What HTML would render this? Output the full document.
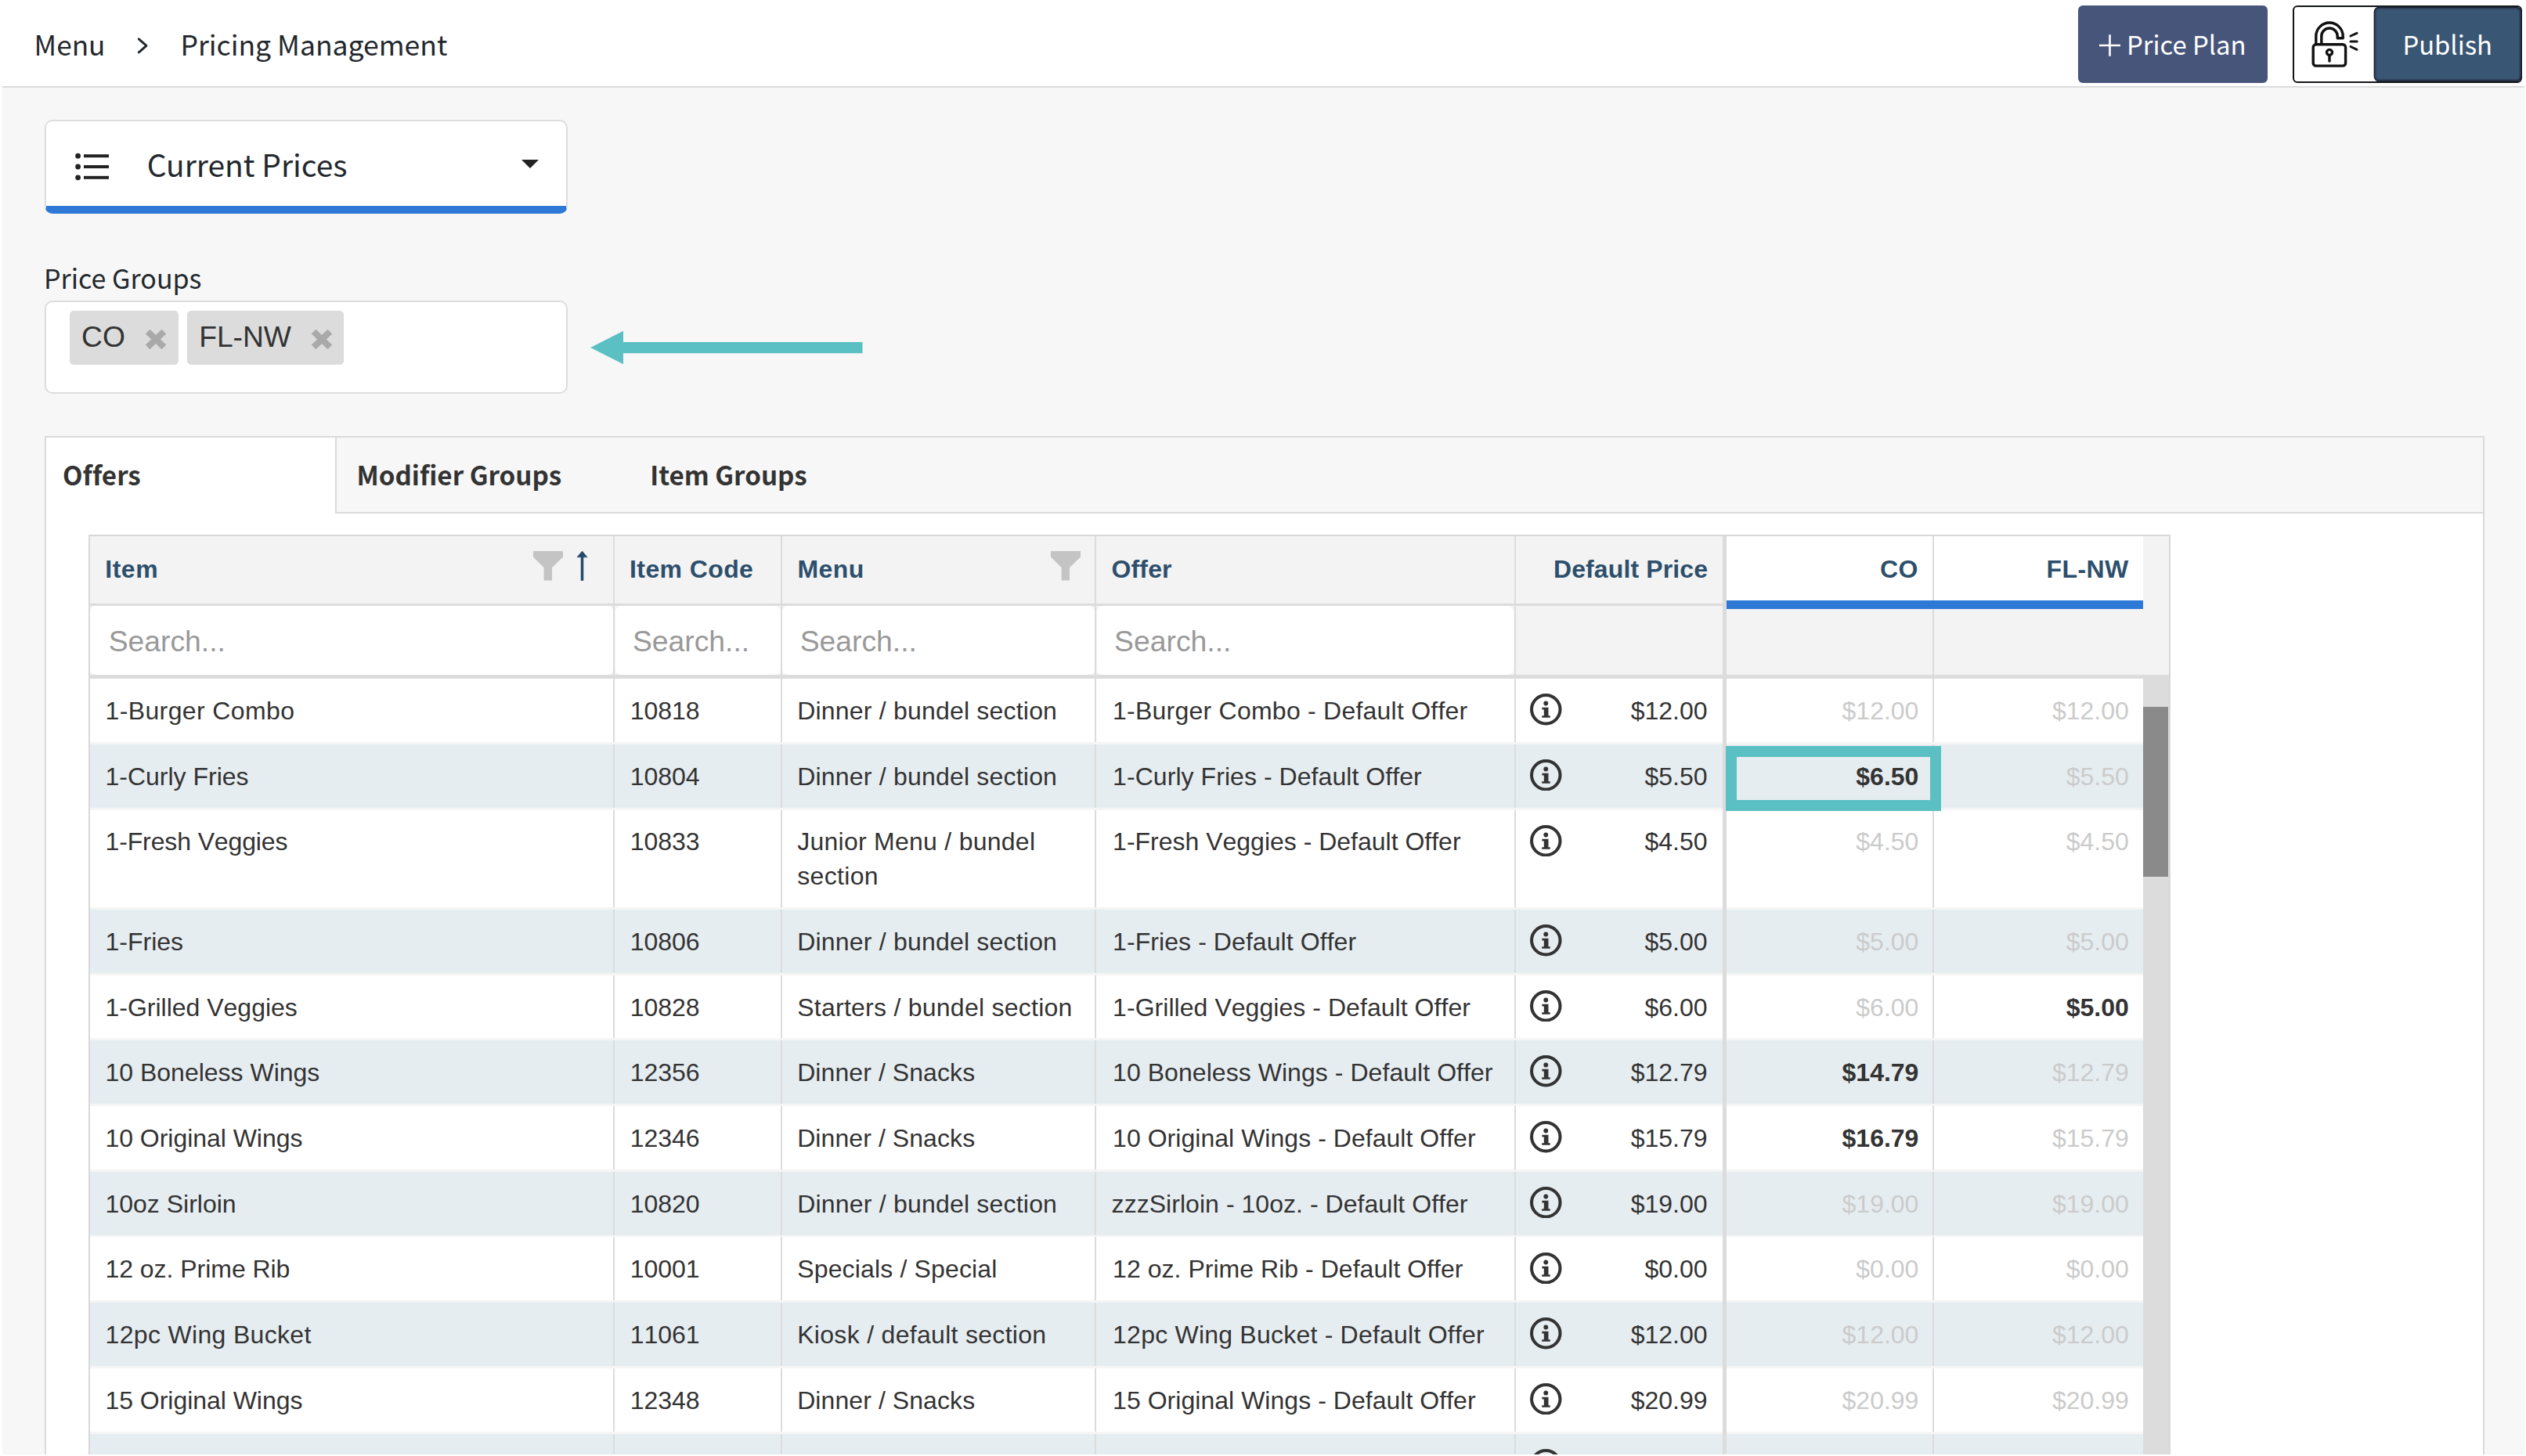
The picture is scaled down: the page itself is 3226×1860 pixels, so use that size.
<!DOCTYPE html><html lang="en"><head><meta charset="utf-8"><title>Pricing Management</title><style>
*{box-sizing:border-box}
html,body{margin:0;padding:0}
body{width:3226px;height:1860px;overflow:hidden;background:#fff;position:relative;font-family:"Liberation Sans",sans-serif;color:#333}
.abs,.abs *{position:absolute}
.abs{left:0;top:0;width:3226px;height:1860px;overflow:hidden}
.ss{font-family:"Noto Sans CJK SC","Liberation Sans",sans-serif;white-space:pre;line-height:1;font-variant-ligatures:none}
.hv{font-family:"Liberation Sans",sans-serif;white-space:pre;font-kerning:none}
#page{left:3px;top:112px;width:3220.8px;height:1746px;background:#f7f7f7}
#hdrline{left:3px;top:110.2px;width:3220.8px;height:2.6px;background:#dcdcdc}
.bc{color:#23282d;top:38px}
.btn{border-radius:6px;color:#fff;font-size:32.8px}
.box{background:#fff;border:2px solid #ddd;border-radius:10px}
.tag{background:#dcdcdc;border-radius:5px;top:396.6px;height:69.2px}
.tag span{font-size:37.2px;top:12.4px;line-height:42px;color:#333;letter-spacing:0}
.tab{font-size:33.2px;font-weight:700;color:#333;top:589px}
.th{font-weight:700;font-size:32.0px;color:#2d4f6c;top:704.7px;line-height:44px}
.ph{font-size:37.3px;color:#999;top:796.9px;line-height:44px}
.srch{background:#fff;border-radius:7px;top:773.8px;height:88.4px}
.row{left:115px;width:2622px;background:#fff}
.row.alt{background:#e6edf1}
.row .ln{left:0;right:0;bottom:0;height:2.9px;background:#f5f5f5}
.c{font-size:32.0px;line-height:43.5px;top:19.86px;color:#333}
.c.r{text-align:right}
.c.g{color:#cbcbcb}
.c.b{font-weight:700}
.info{top:19.1px}
.vl{top:685px;width:2px;height:1175px;background:#dcdcdc}
</style></head><body><div class="abs">
<div id="hdrline"></div><div id="page"></div>
<nav aria-label="Breadcrumb" style="left:0;top:0;width:700px;height:110px">
<span class="ss bc" style="left:43.6px;font-size:35.2px">Menu</span>
<svg style="left:170px;top:42px" width="26" height="32" viewBox="170 42 26 32"><path d="M177.3 49.8L187 58.3L177.3 66.8" fill="none" stroke="#23282d" stroke-width="3" stroke-linecap="round" stroke-linejoin="round"/></svg>
<span class="ss bc" style="left:230.6px;font-size:35.5px">Pricing Management</span></nav>
<div class="btn" role="button" style="left:2654px;top:7px;width:242px;height:99px;background:#47557b"><svg style="left:26px;top:36px" width="30" height="30" viewBox="0 0 30 30"><path d="M14.5 1.3v27.4M1 15h27" stroke="#fff" stroke-width="2.6" fill="none"/></svg><span class="ss" style="left:62px;top:32.8px">Price Plan</span></div>
<div style="left:2928.2px;top:7px;width:293px;height:98.6px;border:2.6px solid #121417;border-radius:6px;background:#fff"></div>
<div class="btn" role="button" style="left:3033px;top:10.3px;width:186.2px;height:92.8px;background:#3a5675;border-radius:5.5px;border:2.2px solid #30415c;box-shadow:0 0 0 1.4px #1a2431"><span class="ss" style="left:33.4px;top:27.3px">Publish</span></div>
<svg style="left:2940px;top:20px" width="80" height="75" viewBox="2940 20 80 75" fill="none" stroke="#111" stroke-width="3.4" stroke-linecap="round" stroke-linejoin="round"><rect x="2954.2" y="56.8" width="41.4" height="27.3" rx="3.6"/><path d="M2957.8 56V46.2A17.2 17.2 0 0 1 2992.2 46.2V48.8H2985.2V46.2A10.2 10.2 0 0 0 2964.8 46.2V56"/><circle cx="2975" cy="66.9" r="3.5"/><path d="M2975 70.5V78"/><path d="M3002 46L3010 42.3M3002 52.9H3010.2M3002 59.5L3010 63.3" stroke-width="3"/></svg>
<div class="box" style="left:56.5px;top:153px;width:668px;height:120px;border-bottom:10.5px solid #2e79d6"></div>
<svg style="left:96px;top:195px" width="44" height="36" viewBox="0 0 44 36" fill="#222"><circle cx="3.6" cy="4.2" r="3.4"/><circle cx="3.6" cy="18" r="3.4"/><circle cx="3.6" cy="31.8" r="3.4"/><rect x="11" y="2.2" width="32" height="4"/><rect x="11" y="16" width="32" height="4"/><rect x="11" y="29.8" width="32" height="4"/></svg>
<span class="ss" style="left:187.7px;top:190.2px;font-size:38.95px;color:#23282d">Current Prices</span>
<svg style="left:666px;top:204px" width="22" height="11" viewBox="0 0 22 11"><path d="M0 0h22L11 11z" fill="#222"/></svg>
<span class="ss" style="left:56px;top:337.7px;font-size:34px;color:#23282d">Price Groups</span>
<div class="box" style="left:56.5px;top:383.5px;width:668px;height:119px"></div>
<div class="tag" style="left:88.7px;width:139px"><span class="hv" style="left:15.4px">CO</span><svg style="left:96.8px;top:23px" width="28" height="27" viewBox="0 0 28 27"><path d="M3.6 3.6L24.4 23.4M24.4 3.6L3.6 23.4" stroke="#a9a9a9" stroke-width="8.2" fill="none"/></svg></div>
<div class="tag" style="left:238.7px;width:200px"><span class="hv" style="left:15.5px">FL-NW</span><svg style="left:158.3px;top:23px" width="28" height="27" viewBox="0 0 28 27"><path d="M3.6 3.6L24.4 23.4M24.4 3.6L3.6 23.4" stroke="#a9a9a9" stroke-width="8.2" fill="none"/></svg></div>
<svg style="left:750px;top:418px" width="356" height="52" viewBox="750 418 356 52"><path d="M754 444.1L796 422.8V437H1101.5V451.3H796V465.2z" fill="#5bc0c3"/></svg>
<div style="left:57px;top:557px;width:3116px;height:1320px;border:2px solid #dadada;background:#fff"></div>
<div style="left:428px;top:559px;width:2743px;height:96.5px;background:#f7f7f7;border-left:2px solid #dadada;border-bottom:2px solid #dadada"></div>
<span class="ss tab" role="tab" aria-selected="true" style="left:80px">Offers</span><span class="ss tab" role="tab" style="left:455.4px">Modifier Groups</span><span class="ss tab" role="tab" style="left:830.2px">Item Groups</span>
<div style="left:113px;top:683px;width:2658.8px;height:1200px;border:2px solid #d8d8d8;background:#fff"></div>
<div style="left:115px;top:685px;width:2654.8px;height:177.5px;background:#f3f3f3"></div>
<div style="left:2204.5px;top:685px;width:532.5px;height:82.5px;background:#fff"></div>
<div style="left:115px;top:771.4px;width:2087px;height:2.4px;background:#dcdcdc"></div>
<div class="srch" style="left:115.0px;width:667.8px"></div>
<span class="hv ph" style="left:138.7px">Search...</span>
<div class="srch" style="left:785.6px;width:211.0px"></div>
<span class="hv ph" style="left:807.9px">Search...</span>
<div class="srch" style="left:999.4px;width:398.6px"></div>
<span class="hv ph" style="left:1021.7px">Search...</span>
<div class="srch" style="left:1400.8px;width:532.3px"></div>
<span class="hv ph" style="left:1423.1px">Search...</span>
<span class="hv th" style="left:134.2px;letter-spacing:0.567px">Item</span>
<span class="hv th" style="left:804.1px;letter-spacing:0.384px">Item Code</span>
<span class="hv th" style="left:1018.5px;letter-spacing:0.449px">Menu</span>
<span class="hv th" style="left:1419.6px;letter-spacing:0.114px">Offer</span>
<span class="hv th" style="right:1044.8px;letter-spacing:0.127px">Default Price</span>
<span class="hv th" style="right:776.4px;letter-spacing:0.304px">CO</span>
<span class="hv th" style="right:507.5px;letter-spacing:0.367px">FL-NW</span>
<svg style="left:681px;top:704px" width="38" height="37.5" viewBox="0 0 38 37.5"><path d="M0 0h38v7.5L24 21v16.5H13.6V21L0 7.5z" fill="#c4c4c4"/></svg>
<svg style="left:1341.5px;top:704px" width="38" height="37.5" viewBox="0 0 38 37.5"><path d="M0 0h38v7.5L24 21v16.5H13.6V21L0 7.5z" fill="#c4c4c4"/></svg>
<svg style="left:736.1px;top:704.3px" width="15" height="38" viewBox="0 0 15 38"><path d="M7.5 0L14 7.8H8.95V37.5H6.05V7.8H1z" fill="#23496a" stroke="#23496a" stroke-width=".6" stroke-linejoin="round"/></svg>
<div class="row" role="row" style="top:867.20px;height:83.70px"><div class="ln"></div>
<span class="hv c" style="left:19.5px;letter-spacing:0.377px">1-Burger Combo</span>
<span class="hv c" style="left:689.7px;letter-spacing:-0.005px">10818</span>
<span class="hv c" style="left:903.2px;top:19.86px;letter-spacing:0.201px">Dinner / bundel section</span>
<span class="hv c" style="left:1306.1px;letter-spacing:0.234px">1-Burger Combo - Default Offer</span>
<svg class="info" style="left:1839.4px" viewBox="0 0 40 40" width="40.5" height="40.5"><circle cx="20" cy="20" r="18" fill="none" stroke="#333" stroke-width="4"/><circle cx="20" cy="12.3" r="2.9" fill="#333"/><path d="M15.2 17.6h8v10.2h2.2v2.6h-10.4v-2.6h2.6v-7.6h-2.4z" fill="#333"/></svg>
<span class="hv c r" style="right:556.5px;letter-spacing:-0.003px">$12.00</span>
<span class="hv c r g" style="right:286.6px;letter-spacing:-0.003px">$12.00</span>
<span class="hv c r g" style="right:18.2px;letter-spacing:-0.003px">$12.00</span>
</div>
<div class="row alt" role="row" style="top:950.90px;height:83.70px"><div class="ln"></div>
<span class="hv c" style="left:19.5px;letter-spacing:-0.002px">1-Curly Fries</span>
<span class="hv c" style="left:689.7px;letter-spacing:-0.005px">10804</span>
<span class="hv c" style="left:903.2px;top:19.86px;letter-spacing:0.201px">Dinner / bundel section</span>
<span class="hv c" style="left:1306.1px;letter-spacing:0.059px">1-Curly Fries - Default Offer</span>
<svg class="info" style="left:1839.4px" viewBox="0 0 40 40" width="40.5" height="40.5"><circle cx="20" cy="20" r="18" fill="none" stroke="#333" stroke-width="4"/><circle cx="20" cy="12.3" r="2.9" fill="#333"/><path d="M15.2 17.6h8v10.2h2.2v2.6h-10.4v-2.6h2.6v-7.6h-2.4z" fill="#333"/></svg>
<span class="hv c r" style="right:556.5px;letter-spacing:-0.003px">$5.50</span>
<span class="hv c r b" style="right:286.6px;letter-spacing:-0.003px">$6.50</span>
<span class="hv c r g" style="right:18.2px;letter-spacing:-0.003px">$5.50</span>
</div>
<div class="row" role="row" style="top:1034.60px;height:127.35px"><div class="ln"></div>
<span class="hv c" style="left:19.5px;letter-spacing:-0.126px">1-Fresh Veggies</span>
<span class="hv c" style="left:689.7px;letter-spacing:-0.005px">10833</span>
<span class="hv c" style="left:903.2px;top:19.86px;letter-spacing:0.263px">Junior Menu / bundel</span>
<span class="hv c" style="left:903.2px;top:63.36px;letter-spacing:0.332px">section</span>
<span class="hv c" style="left:1306.1px;letter-spacing:-0.005px">1-Fresh Veggies - Default Offer</span>
<svg class="info" style="left:1839.4px" viewBox="0 0 40 40" width="40.5" height="40.5"><circle cx="20" cy="20" r="18" fill="none" stroke="#333" stroke-width="4"/><circle cx="20" cy="12.3" r="2.9" fill="#333"/><path d="M15.2 17.6h8v10.2h2.2v2.6h-10.4v-2.6h2.6v-7.6h-2.4z" fill="#333"/></svg>
<span class="hv c r" style="right:556.5px;letter-spacing:-0.003px">$4.50</span>
<span class="hv c r g" style="right:286.6px;letter-spacing:-0.003px">$4.50</span>
<span class="hv c r g" style="right:18.2px;letter-spacing:-0.003px">$4.50</span>
</div>
<div class="row alt" role="row" style="top:1161.95px;height:83.70px"><div class="ln"></div>
<span class="hv c" style="left:19.5px;letter-spacing:-0.001px">1-Fries</span>
<span class="hv c" style="left:689.7px;letter-spacing:-0.005px">10806</span>
<span class="hv c" style="left:903.2px;top:19.86px;letter-spacing:0.201px">Dinner / bundel section</span>
<span class="hv c" style="left:1306.1px;letter-spacing:0.075px">1-Fries - Default Offer</span>
<svg class="info" style="left:1839.4px" viewBox="0 0 40 40" width="40.5" height="40.5"><circle cx="20" cy="20" r="18" fill="none" stroke="#333" stroke-width="4"/><circle cx="20" cy="12.3" r="2.9" fill="#333"/><path d="M15.2 17.6h8v10.2h2.2v2.6h-10.4v-2.6h2.6v-7.6h-2.4z" fill="#333"/></svg>
<span class="hv c r" style="right:556.5px;letter-spacing:-0.003px">$5.00</span>
<span class="hv c r g" style="right:286.6px;letter-spacing:-0.003px">$5.00</span>
<span class="hv c r g" style="right:18.2px;letter-spacing:-0.003px">$5.00</span>
</div>
<div class="row" role="row" style="top:1245.65px;height:83.70px"><div class="ln"></div>
<span class="hv c" style="left:19.5px;letter-spacing:-0.008px">1-Grilled Veggies</span>
<span class="hv c" style="left:689.7px;letter-spacing:-0.005px">10828</span>
<span class="hv c" style="left:903.2px;top:19.86px;letter-spacing:0.255px">Starters / bundel section</span>
<span class="hv c" style="left:1306.1px;letter-spacing:0.048px">1-Grilled Veggies - Default Offer</span>
<svg class="info" style="left:1839.4px" viewBox="0 0 40 40" width="40.5" height="40.5"><circle cx="20" cy="20" r="18" fill="none" stroke="#333" stroke-width="4"/><circle cx="20" cy="12.3" r="2.9" fill="#333"/><path d="M15.2 17.6h8v10.2h2.2v2.6h-10.4v-2.6h2.6v-7.6h-2.4z" fill="#333"/></svg>
<span class="hv c r" style="right:556.5px;letter-spacing:-0.003px">$6.00</span>
<span class="hv c r g" style="right:286.6px;letter-spacing:-0.003px">$6.00</span>
<span class="hv c r b" style="right:18.2px;letter-spacing:-0.003px">$5.00</span>
</div>
<div class="row alt" role="row" style="top:1329.35px;height:83.70px"><div class="ln"></div>
<span class="hv c" style="left:19.5px;letter-spacing:-0.006px">10 Boneless Wings</span>
<span class="hv c" style="left:689.7px;letter-spacing:-0.005px">12356</span>
<span class="hv c" style="left:903.2px;top:19.86px;letter-spacing:0.076px">Dinner / Snacks</span>
<span class="hv c" style="left:1306.1px;letter-spacing:0.050px">10 Boneless Wings - Default Offer</span>
<svg class="info" style="left:1839.4px" viewBox="0 0 40 40" width="40.5" height="40.5"><circle cx="20" cy="20" r="18" fill="none" stroke="#333" stroke-width="4"/><circle cx="20" cy="12.3" r="2.9" fill="#333"/><path d="M15.2 17.6h8v10.2h2.2v2.6h-10.4v-2.6h2.6v-7.6h-2.4z" fill="#333"/></svg>
<span class="hv c r" style="right:556.5px;letter-spacing:-0.003px">$12.79</span>
<span class="hv c r b" style="right:286.6px;letter-spacing:-0.003px">$14.79</span>
<span class="hv c r g" style="right:18.2px;letter-spacing:-0.003px">$12.79</span>
</div>
<div class="row" role="row" style="top:1413.05px;height:83.70px"><div class="ln"></div>
<span class="hv c" style="left:19.5px;letter-spacing:-0.038px">10 Original Wings</span>
<span class="hv c" style="left:689.7px;letter-spacing:-0.005px">12346</span>
<span class="hv c" style="left:903.2px;top:19.86px;letter-spacing:0.076px">Dinner / Snacks</span>
<span class="hv c" style="left:1306.1px;letter-spacing:0.033px">10 Original Wings - Default Offer</span>
<svg class="info" style="left:1839.4px" viewBox="0 0 40 40" width="40.5" height="40.5"><circle cx="20" cy="20" r="18" fill="none" stroke="#333" stroke-width="4"/><circle cx="20" cy="12.3" r="2.9" fill="#333"/><path d="M15.2 17.6h8v10.2h2.2v2.6h-10.4v-2.6h2.6v-7.6h-2.4z" fill="#333"/></svg>
<span class="hv c r" style="right:556.5px;letter-spacing:-0.003px">$15.79</span>
<span class="hv c r b" style="right:286.6px;letter-spacing:-0.003px">$16.79</span>
<span class="hv c r g" style="right:18.2px;letter-spacing:-0.003px">$15.79</span>
</div>
<div class="row alt" role="row" style="top:1496.75px;height:83.70px"><div class="ln"></div>
<span class="hv c" style="left:19.5px;letter-spacing:-0.011px">10oz Sirloin</span>
<span class="hv c" style="left:689.7px;letter-spacing:-0.005px">10820</span>
<span class="hv c" style="left:903.2px;top:19.86px;letter-spacing:0.201px">Dinner / bundel section</span>
<span class="hv c" style="left:1304.6px;letter-spacing:0.044px">zzzSirloin - 10oz. - Default Offer</span>
<svg class="info" style="left:1839.4px" viewBox="0 0 40 40" width="40.5" height="40.5"><circle cx="20" cy="20" r="18" fill="none" stroke="#333" stroke-width="4"/><circle cx="20" cy="12.3" r="2.9" fill="#333"/><path d="M15.2 17.6h8v10.2h2.2v2.6h-10.4v-2.6h2.6v-7.6h-2.4z" fill="#333"/></svg>
<span class="hv c r" style="right:556.5px;letter-spacing:-0.003px">$19.00</span>
<span class="hv c r g" style="right:286.6px;letter-spacing:-0.003px">$19.00</span>
<span class="hv c r g" style="right:18.2px;letter-spacing:-0.003px">$19.00</span>
</div>
<div class="row" role="row" style="top:1580.45px;height:83.70px"><div class="ln"></div>
<span class="hv c" style="left:19.5px;letter-spacing:-0.041px">12 oz. Prime Rib</span>
<span class="hv c" style="left:689.7px;letter-spacing:-0.005px">10001</span>
<span class="hv c" style="left:903.2px;top:19.86px;letter-spacing:0.156px">Specials / Special</span>
<span class="hv c" style="left:1306.1px;letter-spacing:0.034px">12 oz. Prime Rib - Default Offer</span>
<svg class="info" style="left:1839.4px" viewBox="0 0 40 40" width="40.5" height="40.5"><circle cx="20" cy="20" r="18" fill="none" stroke="#333" stroke-width="4"/><circle cx="20" cy="12.3" r="2.9" fill="#333"/><path d="M15.2 17.6h8v10.2h2.2v2.6h-10.4v-2.6h2.6v-7.6h-2.4z" fill="#333"/></svg>
<span class="hv c r" style="right:556.5px;letter-spacing:-0.003px">$0.00</span>
<span class="hv c r g" style="right:286.6px;letter-spacing:-0.003px">$0.00</span>
<span class="hv c r g" style="right:18.2px;letter-spacing:-0.003px">$0.00</span>
</div>
<div class="row alt" role="row" style="top:1664.15px;height:83.70px"><div class="ln"></div>
<span class="hv c" style="left:19.5px;letter-spacing:0.331px">12pc Wing Bucket</span>
<span class="hv c" style="left:689.7px;letter-spacing:-0.005px">11061</span>
<span class="hv c" style="left:903.2px;top:19.86px;letter-spacing:0.304px">Kiosk / default section</span>
<span class="hv c" style="left:1306.1px;letter-spacing:0.220px">12pc Wing Bucket - Default Offer</span>
<svg class="info" style="left:1839.4px" viewBox="0 0 40 40" width="40.5" height="40.5"><circle cx="20" cy="20" r="18" fill="none" stroke="#333" stroke-width="4"/><circle cx="20" cy="12.3" r="2.9" fill="#333"/><path d="M15.2 17.6h8v10.2h2.2v2.6h-10.4v-2.6h2.6v-7.6h-2.4z" fill="#333"/></svg>
<span class="hv c r" style="right:556.5px;letter-spacing:-0.003px">$12.00</span>
<span class="hv c r g" style="right:286.6px;letter-spacing:-0.003px">$12.00</span>
<span class="hv c r g" style="right:18.2px;letter-spacing:-0.003px">$12.00</span>
</div>
<div class="row" role="row" style="top:1747.85px;height:83.70px"><div class="ln"></div>
<span class="hv c" style="left:19.5px;letter-spacing:-0.038px">15 Original Wings</span>
<span class="hv c" style="left:689.7px;letter-spacing:-0.005px">12348</span>
<span class="hv c" style="left:903.2px;top:19.86px;letter-spacing:0.076px">Dinner / Snacks</span>
<span class="hv c" style="left:1306.1px;letter-spacing:0.033px">15 Original Wings - Default Offer</span>
<svg class="info" style="left:1839.4px" viewBox="0 0 40 40" width="40.5" height="40.5"><circle cx="20" cy="20" r="18" fill="none" stroke="#333" stroke-width="4"/><circle cx="20" cy="12.3" r="2.9" fill="#333"/><path d="M15.2 17.6h8v10.2h2.2v2.6h-10.4v-2.6h2.6v-7.6h-2.4z" fill="#333"/></svg>
<span class="hv c r" style="right:556.5px;letter-spacing:-0.003px">$20.99</span>
<span class="hv c r g" style="right:286.6px;letter-spacing:-0.003px">$20.99</span>
<span class="hv c r g" style="right:18.2px;letter-spacing:-0.003px">$20.99</span>
</div>
<div class="row alt" role="row" style="top:1831.55px;height:83.70px"><div class="ln"></div>
<span class="hv c" style="left:19.5px;letter-spacing:0.025px">15 Traditional Wings</span>
<span class="hv c" style="left:689.7px;letter-spacing:-0.005px">12349</span>
<span class="hv c" style="left:903.2px;top:19.86px;letter-spacing:0.076px">Dinner / Snacks</span>
<span class="hv c" style="left:1306.1px;letter-spacing:0.062px">15 Traditional Wings - Default Offer</span>
<svg class="info" style="left:1839.4px" viewBox="0 0 40 40" width="40.5" height="40.5"><circle cx="20" cy="20" r="18" fill="none" stroke="#333" stroke-width="4"/><circle cx="20" cy="12.3" r="2.9" fill="#333"/><path d="M15.2 17.6h8v10.2h2.2v2.6h-10.4v-2.6h2.6v-7.6h-2.4z" fill="#333"/></svg>
<span class="hv c r" style="right:556.5px;letter-spacing:-0.003px">$22.99</span>
<span class="hv c r g" style="right:286.6px;letter-spacing:-0.003px">$22.99</span>
<span class="hv c r g" style="right:18.2px;letter-spacing:-0.003px">$22.99</span>
</div>
<div style="left:115px;top:862.2px;width:2654.8px;height:5px;background:#dcdcdc"></div>
<div class="vl" style="left:783.2px"></div>
<div class="vl" style="left:997.0px"></div>
<div class="vl" style="left:1398.4px"></div>
<div class="vl" style="left:1933.5px"></div>
<div class="vl" style="left:2468.0px"></div>
<div style="left:115px;top:948.00px;width:2622px;height:2.9px;background:#f5f5f5"></div>
<div style="left:115px;top:1031.70px;width:2622px;height:2.9px;background:#f5f5f5"></div>
<div style="left:115px;top:1159.05px;width:2622px;height:2.9px;background:#f5f5f5"></div>
<div style="left:115px;top:1242.75px;width:2622px;height:2.9px;background:#f5f5f5"></div>
<div style="left:115px;top:1326.45px;width:2622px;height:2.9px;background:#f5f5f5"></div>
<div style="left:115px;top:1410.15px;width:2622px;height:2.9px;background:#f5f5f5"></div>
<div style="left:115px;top:1493.85px;width:2622px;height:2.9px;background:#f5f5f5"></div>
<div style="left:115px;top:1577.55px;width:2622px;height:2.9px;background:#f5f5f5"></div>
<div style="left:115px;top:1661.25px;width:2622px;height:2.9px;background:#f5f5f5"></div>
<div style="left:115px;top:1744.95px;width:2622px;height:2.9px;background:#f5f5f5"></div>
<div style="left:115px;top:1828.65px;width:2622px;height:2.9px;background:#f5f5f5"></div>
<div style="left:115px;top:1912.35px;width:2622px;height:2.9px;background:#f5f5f5"></div>
<div class="vl" style="left:2199.5px;width:5px"></div>
<div style="left:2204.5px;top:767.3px;width:532.5px;height:10.4px;background:#2e79d6"></div>
<div style="left:2737px;top:867.2px;width:32.8px;height:1000px;background:#dcdcdc"></div>
<div style="left:2737px;top:902.5px;width:32px;height:217.7px;background:#8a8a8a"></div>
<div style="left:2204px;top:952.7px;width:275px;height:83.2px;border:14px solid #5bc0c3"></div>
<div style="left:0;top:1857.9px;width:3226px;height:3px;background:#fff"></div>
</div></body></html>
